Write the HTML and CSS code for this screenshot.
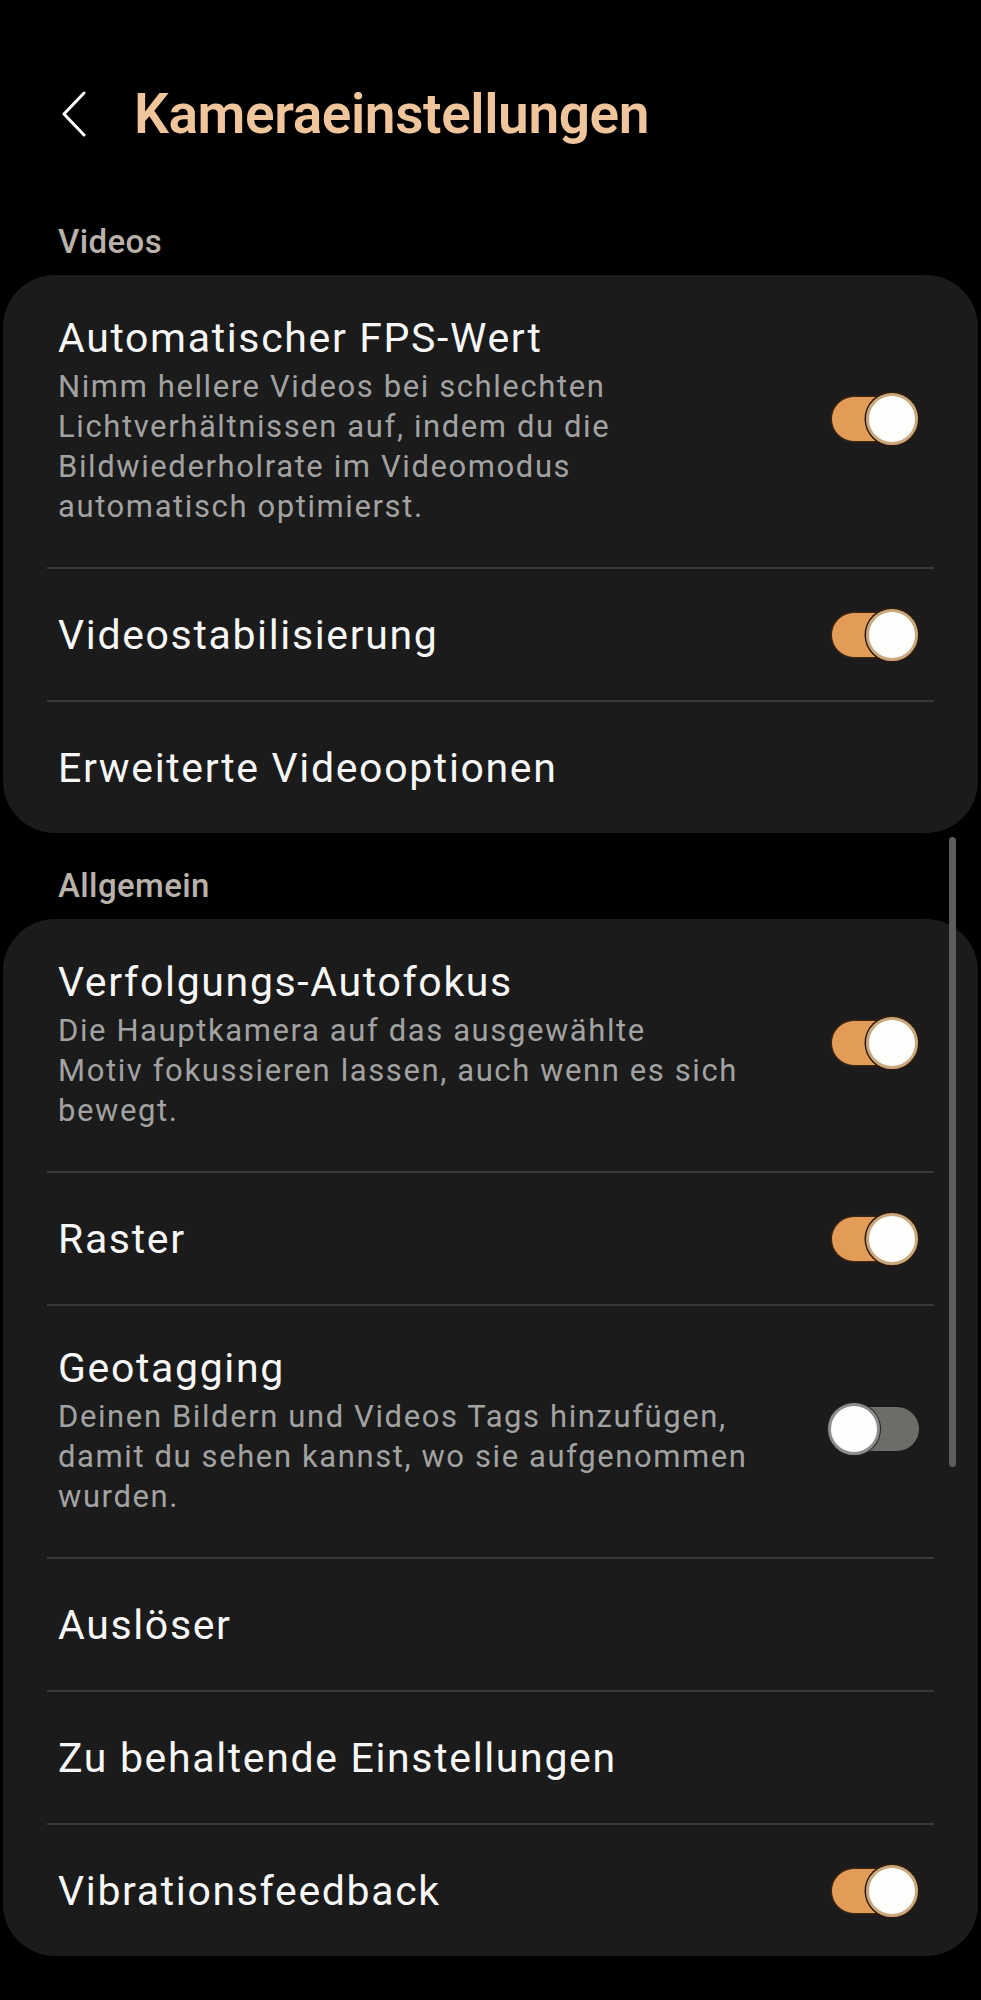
FILE: index.html
```html
<!DOCTYPE html>
<html lang="de">
<head>
<meta charset="utf-8">
<title>Kameraeinstellungen</title>
<link rel="stylesheet" href="styles.css">
</head>
<body>
<div class="screen">
  <header class="appbar">
    <span class="back">
      <svg width="26" height="46" viewBox="0 0 26 46"><polyline points="23,2 3,23 23,44" fill="none" stroke="#ffffff" stroke-width="3" stroke-linecap="round" stroke-linejoin="round"/></svg>
    </span>
    <h1 class="title">Kameraeinstellungen</h1>
  </header>

  <div class="section-label first">Videos</div>
  <section class="card">
    <div class="row tall">
      <div class="text">
        <div class="item-title">Automatischer FPS-Wert</div>
        <div class="item-desc">Nimm hellere Videos bei schlechten<br>Lichtverhältnissen auf, indem du die<br>Bildwiederholrate im Videomodus<br>automatisch optimierst.</div>
      </div>
      <span class="switch on"><span class="thumb"></span></span>
    </div>
    <div class="row">
      <div class="text"><div class="item-title">Videostabilisierung</div></div>
      <span class="switch on"><span class="thumb"></span></span>
    </div>
    <div class="row">
      <div class="text"><div class="item-title">Erweiterte Videooptionen</div></div>
    </div>
  </section>

  <div class="section-label">Allgemein</div>
  <section class="card">
    <div class="row tall">
      <div class="text">
        <div class="item-title">Verfolgungs-Autofokus</div>
        <div class="item-desc">Die Hauptkamera auf das ausgewählte<br>Motiv fokussieren lassen, auch wenn es sich<br>bewegt.</div>
      </div>
      <span class="switch on"><span class="thumb"></span></span>
    </div>
    <div class="row">
      <div class="text"><div class="item-title">Raster</div></div>
      <span class="switch on"><span class="thumb"></span></span>
    </div>
    <div class="row tall">
      <div class="text">
        <div class="item-title">Geotagging</div>
        <div class="item-desc">Deinen Bildern und Videos Tags hinzufügen,<br>damit du sehen kannst, wo sie aufgenommen<br>wurden.</div>
      </div>
      <span class="switch off"><span class="thumb"></span></span>
    </div>
    <div class="row">
      <div class="text"><div class="item-title">Auslöser</div></div>
    </div>
    <div class="row">
      <div class="text"><div class="item-title">Zu behaltende Einstellungen</div></div>
    </div>
    <div class="row">
      <div class="text"><div class="item-title">Vibrationsfeedback</div></div>
      <span class="switch on"><span class="thumb"></span></span>
    </div>
  </section>

  <div class="scrollbar"></div>
</div>
</body>
</html>
```
FILE: styles.css
```css
html, body {
  margin: 0;
  padding: 0;
  background: #000000;
}

body {
  font-family: Roboto, "Liberation Sans", sans-serif;
  color: #f6f6f6;
  width: 981px;
  min-height: 2000px;
}

.screen {
  position: relative;
  padding-bottom: 44px;
}

.appbar {
  display: flex;
  align-items: center;
  padding: 82px 0 0 61px;
  height: 64px;
}

.back {
  display: flex;
  width: 26px;
  height: 46px;
  margin-right: 47px;
}

.title {
  margin: 0;
  font-size: 55px;
  line-height: 64px;
  font-weight: 600;
  color: #f0c59c;
  letter-spacing: -0.4px;
}

.section-label {
  font-size: 33px;
  line-height: 40px;
  font-weight: 500;
  color: #b9b2aa;
  padding: 0 0 13px 58px;
  letter-spacing: 0.4px;
}

.section-label.first {
  margin-top: 76px;
}

.card {
  background: #1b1b1b;
  margin: 0 3px 33px 3px;
  border-radius: 52px;
  display: flex;
  flex-direction: column;
}

.row {
  display: flex;
  align-items: center;
  margin: 0 44px;
  padding: 0 16px 0 11px;
  min-height: 133px;
  box-sizing: border-box;
  border-top: 2px solid #393939;
}

.row:first-child {
  border-top: none;
  min-height: 131px;
}

.row.tall {
  padding-top: 35px;
  padding-bottom: 40px;
}

.row.tall:first-child {
  padding-top: 36px;
}

.text {
  flex: 1;
}

.item-title {
  font-size: 41px;
  line-height: 54px;
  font-weight: 400;
  color: #f7f7f7;
  letter-spacing: 1.65px;
}

.item-desc {
  margin-top: 2px;
  font-size: 31px;
  line-height: 40px;
  color: #a2a2a2;
  letter-spacing: 1.6px;
}

.switch {
  position: relative;
  flex: none;
  width: 86px;
  height: 52px;
}

.switch::before {
  content: "";
  position: absolute;
  left: 0;
  top: 4px;
  width: 84px;
  height: 44px;
  border-radius: 22px;
  box-sizing: border-box;
}

.switch.on::before {
  background: #e39c58;
  box-shadow: 0 0 0 1.5px #3a2412;
}

.switch.off::before {
  left: 3px;
  background: #6c6c69;
}

.thumb {
  position: absolute;
  top: 0;
  width: 52px;
  height: 52px;
  border-radius: 50%;
  box-sizing: border-box;
  background: #fefefc;
}

.switch.on .thumb {
  left: 34px;
  border: 3px solid #caa87d;
  box-shadow: 0 0 0 1.5px #2b1a0b;
}

.switch.off .thumb {
  left: -4px;
  border: 3px solid #8d8d8d;
  box-shadow: 0 0 0 1px #222;
}

.scrollbar {
  position: absolute;
  left: 949px;
  top: 837px;
  width: 7px;
  height: 630px;
  border-radius: 4px;
  background: #5d5d5d;
}
```
